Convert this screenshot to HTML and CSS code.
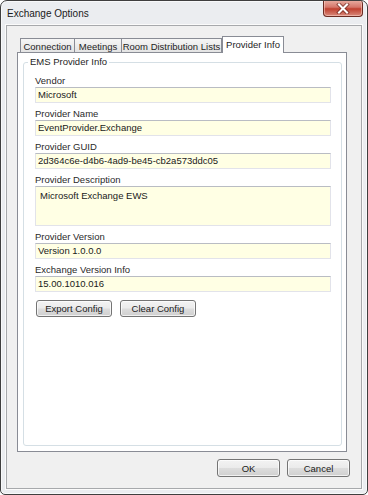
FILE: index.html
```html
<!DOCTYPE html>
<html>
<head>
<meta charset="utf-8">
<link rel="stylesheet" href="styles.css">
</head>
<body>
<div class="window">
  <div class="titlebar">
    <span class="title">Exchange Options</span>
    <div class="close">
      <svg width="14" height="11" viewBox="0 0 14 11">
        <path d="M3 1.5 L11 9.5 M11 1.5 L3 9.5" stroke="#5a1a12" stroke-width="4" stroke-linecap="square" fill="none" opacity="0.55"/>
        <path d="M3 1.5 L11 9.5 M11 1.5 L3 9.5" stroke="#ffffff" stroke-width="2" stroke-linecap="square" fill="none"/>
      </svg>
    </div>
  </div>
  <div class="client">
    <div class="tabs">
      <div class="tab t-conn">Connection</div>
      <div class="tab t-meet">Meetings</div>
      <div class="tab t-room">Room Distribution Lists</div>
      <div class="tab tab-active t-prov">Provider Info</div>
    </div>
    <div class="panel">
      <div class="group">
        <span class="group-title">EMS Provider Info</span>
        <div class="field">
          <div class="label">Vendor</div>
          <div class="input">Microsoft</div>
        </div>
        <div class="field">
          <div class="label">Provider Name</div>
          <div class="input">EventProvider.Exchange</div>
        </div>
        <div class="field">
          <div class="label">Provider GUID</div>
          <div class="input">2d364c6e-d4b6-4ad9-be45-cb2a573ddc05</div>
        </div>
        <div class="field">
          <div class="label">Provider Description</div>
          <div class="input textarea">Microsoft Exchange EWS</div>
        </div>
        <div class="field">
          <div class="label">Provider Version</div>
          <div class="input">Version 1.0.0.0</div>
        </div>
        <div class="field">
          <div class="label">Exchange Version Info</div>
          <div class="input">15.00.1010.016</div>
        </div>
        <div class="actions">
          <button class="btn btn-small">Export Config</button>
          <button class="btn btn-small">Clear Config</button>
        </div>
      </div>
    </div>
    <div class="footer">
      <button class="btn btn-dialog">OK</button>
      <button class="btn btn-dialog">Cancel</button>
    </div>
  </div>
</div>
</body>
</html>
```

FILE: styles.css
```css
* { box-sizing: border-box; }

html, body {
  margin: 0;
  padding: 0;
  background: #ffffff;
}

body {
  font-family: "Liberation Sans", Arial, sans-serif;
  font-size: 9.5px;
  color: #222222;
}

.window {
  width: 368px;
  height: 495px;
  border: 1px solid #3f3f3f;
  border-radius: 7px 7px 5px 5px;
  background: #ebedf0;
  box-shadow: inset 0 0 0 1px #f8f9fa;
  padding: 0 5px 5px 5px;
  display: flex;
  flex-direction: column;
  overflow: hidden;
}

.titlebar {
  height: 24px;
  display: flex;
  align-items: center;
  flex-shrink: 0;
}

.title {
  font-size: 10px;
  color: #1a1a1a;
  padding-left: 1px;
  padding-top: 1px;
  flex: 1;
}

.close {
  align-self: flex-start;
  margin-top: -1px;
  margin-right: -1px;
  width: 40px;
  height: 17px;
  border: 1px solid #6b2b22;
  border-top: none;
  border-radius: 0 4px 4px 4px;
  background: linear-gradient(#eab0a4 0%, #d5766a 45%, #c0402f 55%, #d88a7c 100%);
  box-shadow: inset 0 0 0 1px rgba(255, 220, 210, 0.5);
  display: flex;
  align-items: center;
  justify-content: center;
}

.client {
  flex: 1;
  border: 1px solid #a7a9ac;
  background: #f0f0f0;
  box-shadow: 0 0 0 1px #fbfbfb;
  padding: 10px 11px 11px 10px;
  display: flex;
  flex-direction: column;
}

.tabs {
  height: 17px;
  display: flex;
  align-items: flex-end;
  padding-left: 3px;
  margin-right: 3px;
  position: relative;
  z-index: 1;
  flex-shrink: 0;
}

.tab {
  height: 14px;
  margin-bottom: 1px;
  border: 1px solid #898c95;
  border-bottom: none;
  background: linear-gradient(#f6f6f6, #e3e3e3);
  display: flex;
  align-items: center;
  justify-content: center;
  padding-top: 1px;
  color: #1e1e1e;
  white-space: nowrap;
}

.t-conn { width: 55px; }
.t-meet { width: 47px; border-left: none; }
.t-room { width: 100px; border-left: none; }

.tab-active {
  height: 17px;
  margin-bottom: 0;
  background: #ffffff;
  padding-top: 0;
  padding-bottom: 2px;
}

.t-prov { width: 62px; }

.panel {
  flex: 1;
  margin-top: -1px;
  margin-right: 3px;
  border: 1px solid #898c95;
  background: #ffffff;
  display: flex;
  flex-direction: column;
}

.group {
  flex: 1;
  position: relative;
  margin: 9px 4px 5px 5px;
  border: 1px solid #d5dfe5;
  border-radius: 3px;
  padding: 12px 10px 0 11px;
  display: flex;
  flex-direction: column;
  gap: 5px;
}

.group-title {
  position: absolute;
  top: -7px;
  left: 4px;
  padding: 0 2px;
  background: #ffffff;
  line-height: 12px;
  color: #1e1e1e;
}

.field {
  display: flex;
  flex-direction: column;
}

.label {
  height: 12px;
  line-height: 12px;
  color: #2a2a2a;
}

.input {
  height: 16px;
  line-height: 14px;
  background: #ffffe4;
  border: 1px solid #e2e3ea;
  border-top-color: #b9bcc3;
  padding-left: 2px;
  color: #1a1a1a;
  white-space: nowrap;
}

.textarea {
  height: 40px;
  padding: 2px 0 0 4px;
}

.actions {
  display: flex;
  gap: 8px;
  margin-top: 3px;
  padding-left: 1px;
}

.btn {
  font-family: "Liberation Sans", Arial, sans-serif;
  font-size: 9.5px;
  color: #1a1a1a;
  border: 1px solid #747474;
  border-radius: 3px;
  background: linear-gradient(#f3f3f3 0%, #ebebeb 48%, #dddddd 52%, #cfcfcf 100%);
  box-shadow: inset 0 0 0 1px rgba(255, 255, 255, 0.7);
  padding: 0;
  margin: 0;
  display: flex;
  align-items: center;
  justify-content: center;
}

.btn-small {
  width: 76px;
  height: 17px;
}

.footer {
  margin-top: 7px;
  display: flex;
  justify-content: flex-end;
  gap: 7px;
  flex-shrink: 0;
}

.btn-dialog {
  width: 63px;
  height: 18px;
}
```
